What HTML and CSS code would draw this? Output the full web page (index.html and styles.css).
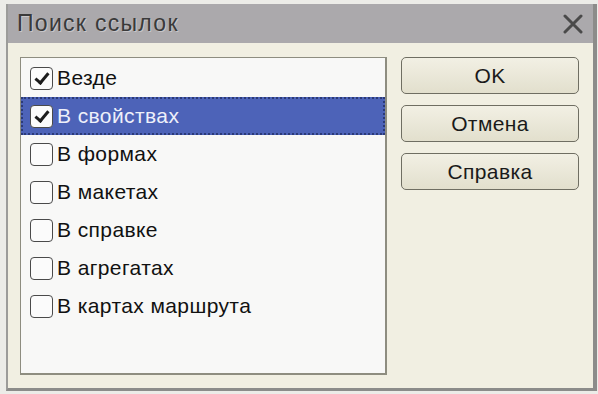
FILE: index.html
```html
<!DOCTYPE html>
<html lang="ru">
<head>
  <meta charset="UTF-8">
  <title>Поиск ссылок</title>
  <link rel="stylesheet" href="styles.css">
</head>
<body>
  <div class="window">
    <div class="titlebar">
      <span class="title">Поиск ссылок</span>
      <svg class="close" width="20" height="20" viewBox="0 0 20 20">
        <path d="M2 2 L18 18 M18 2 L2 18" stroke="#4a4a4a" stroke-width="3" stroke-linecap="round"/>
      </svg>
    </div>

    <div class="content">
      <ul class="list">
        <li class="item"><span class="box checked"></span>Везде</li>
        <li class="item selected"><span class="box checked"></span>В свойствах</li>
        <li class="item"><span class="box"></span>В формах</li>
        <li class="item"><span class="box"></span>В макетах</li>
        <li class="item"><span class="box"></span>В справке</li>
        <li class="item"><span class="box"></span>В агрегатах</li>
        <li class="item"><span class="box"></span>В картах маршрута</li>
      </ul>

      <div class="buttons">
        <button class="btn">OK</button>
        <button class="btn">Отмена</button>
        <button class="btn">Справка</button>
      </div>
    </div>
  </div>
</body>
</html>
```

FILE: styles.css
```css
body {
  margin: 0;
  background-color: #ecece8;
  font-family: "Liberation Sans", Arial, sans-serif;
}

.window {
  margin: 4px 1px 0 6px;
  width: 585px;
  border-left: 2px solid #9c9c9a;
  border-right: 4px solid #8c8c8a;
  border-bottom: 3px solid #8c8c8a;
  background-color: #f1efe2;
}

.titlebar {
  height: 39px;
  background-color: #aba9ac;
  display: flex;
  align-items: center;
  justify-content: space-between;
  padding: 0 10px 0 9px;
}

.title {
  font-size: 23px;
  color: #3a3a3a;
  letter-spacing: 1.3px;
  text-shadow: 1px 1px 0 #c8c6c8;
}

.close {
  display: block;
}

.content {
  display: flex;
  padding: 14px 14px 13px 12px;
  gap: 14px;
  height: 318px;
}

.list {
  list-style: none;
  margin: 0;
  padding: 1px 0 0 0;
  width: 365px;
  border: 1px solid #8e8d80;
  border-right-width: 2px;
  border-bottom-width: 2px;
  background-color: #f8f8f7;
}

.item {
  height: 38px;
  display: flex;
  align-items: center;
  padding-left: 9px;
  font-size: 21px;
  letter-spacing: 0.4px;
  color: #111;
  box-sizing: border-box;
}

.item.selected {
  background-color: #4d63b8;
  color: #eef0fa;
  outline: 2px dotted #2b3a78;
  outline-offset: -2px;
}

.box {
  width: 21px;
  height: 21px;
  border: 1px solid #4a4a4a;
  border-radius: 4px;
  background-color: #fbfbfb;
  margin-right: 4px;
  position: relative;
  flex-shrink: 0;
}

.box.checked::after {
  content: "";
  position: absolute;
  left: 7px;
  top: 2px;
  width: 5px;
  height: 11px;
  border-right: 3px solid #1c1c1c;
  border-bottom: 3px solid #1c1c1c;
  transform: rotate(40deg);
}

.buttons {
  display: flex;
  flex-direction: column;
  gap: 11px;
}

.btn {
  width: 178px;
  height: 37px;
  border: 1px solid #6f6e62;
  border-radius: 5px;
  background: linear-gradient(#f2f0e4, #e2dfcd);
  font-family: "Liberation Sans", Arial, sans-serif;
  font-size: 21px;
  letter-spacing: 0.4px;
  color: #1a1a1a;
  padding: 0;
}
```
